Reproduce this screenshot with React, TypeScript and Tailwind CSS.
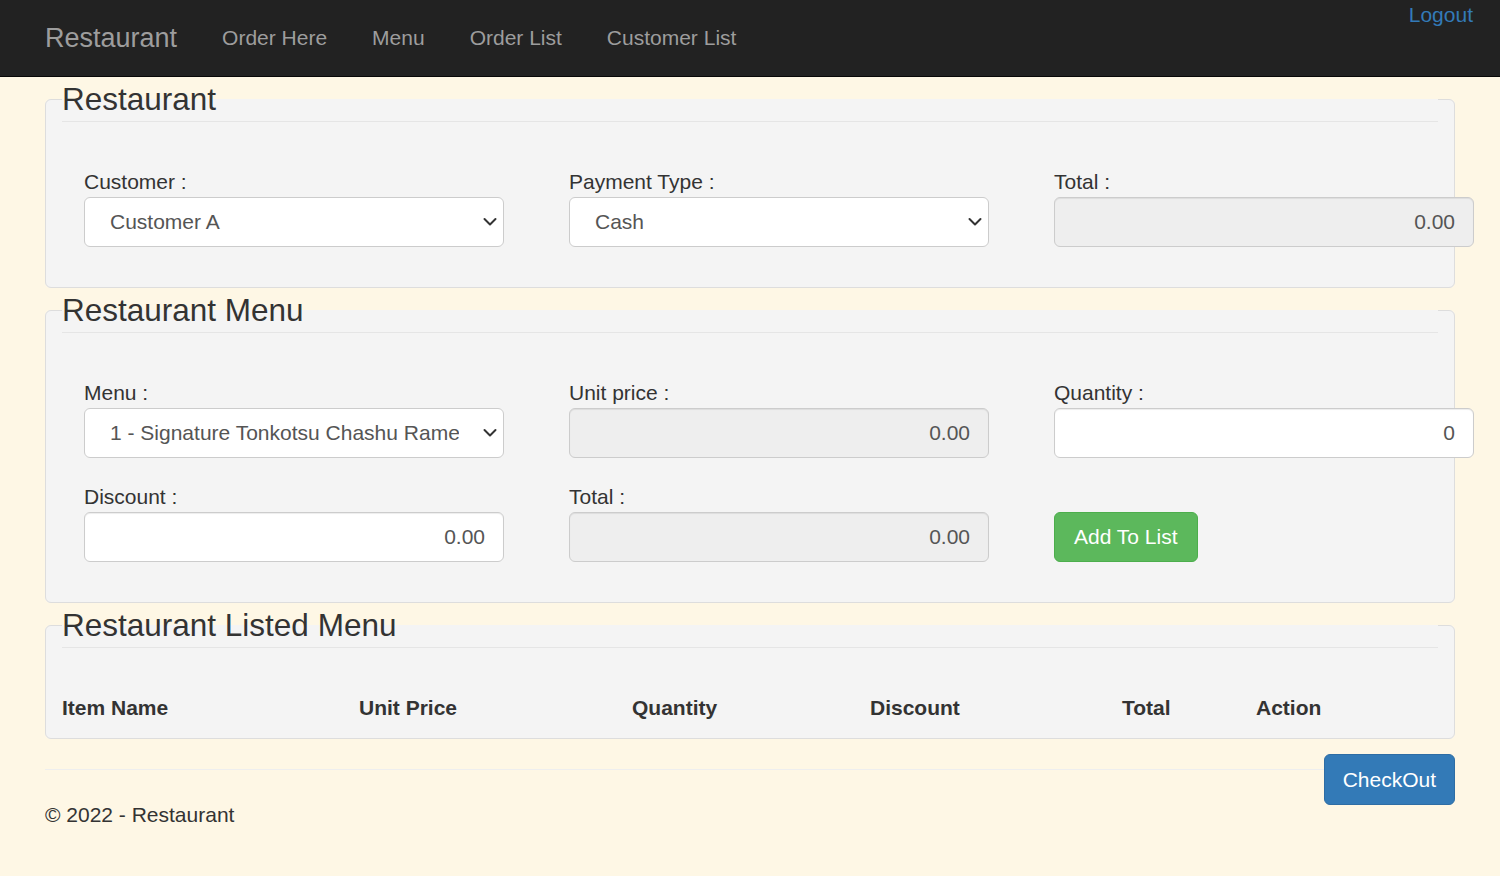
import React from "react";

const font = { fontFamily: '"Liberation Sans", Arial, Helvetica, sans-serif' };

function Chevron() {
  return (
    <svg
      className="pointer-events-none absolute right-[7px] top-1/2 -translate-y-1/2"
      width="14"
      height="9"
      viewBox="0 0 14 9"
      fill="none"
    >
      <path d="M1.5 1.5 L7 7 L12.5 1.5" stroke="#333" strokeWidth="2" strokeLinecap="round" strokeLinejoin="round" />
    </svg>
  );
}

function Select({ value }: { value: string }) {
  return (
    <div className="relative w-[420px] h-[50px]">
      <select
        defaultValue={value}
        className="appearance-none w-full h-full rounded-[6px] border border-[#ccc] bg-white pl-[25px] pr-[44px] text-[21px] text-[#555] outline-none overflow-hidden whitespace-nowrap"
        style={font}
      >
        <option value={value}>{value}</option>
      </select>
      <Chevron />
    </div>
  );
}

function NumInput({ value, readOnly }: { value: string; readOnly?: boolean }) {
  return (
    <input
      readOnly
      value={value}
      className={
        "w-[420px] h-[50px] rounded-[6px] border border-[#ccc] px-[18px] text-right text-[21px] text-[#555] outline-none shadow-[inset_0_1px_1px_rgba(0,0,0,0.075)] " +
        (readOnly ? "bg-[#eeeeee]" : "bg-white")
      }
      style={font}
    />
  );
}

function Field({ label, children }: { label: string; children: React.ReactNode }) {
  return (
    <div className="flex flex-col">
      <label className="text-[21px] leading-[30px] text-[#333]">{label}</label>
      {children}
    </div>
  );
}

function Fieldset({ title, children, className }: { title: string; children: React.ReactNode; className?: string }) {
  return (
    <fieldset className={"min-w-0 border border-[#dddddd] rounded-[6px] bg-[#f4f4f4] px-[16px] " + (className ?? "")}>
      <legend className="w-full border-b border-[#e5e5e5] text-[31.5px] leading-[44px] text-[#333] mb-[30px]">
        {title}
      </legend>
      {children}
    </fieldset>
  );
}

export default function App() {
  return (
    <div className="min-h-[876px] bg-[#fef7e5] text-[#333]" style={font}>
      {/* Navbar */}
      <nav className="h-[77px] bg-[#222222] border-b border-[#080808] flex pl-[45px] pr-[27px]">
        <a className="h-[76px] py-[22.5px] text-[27px] leading-[30px] text-[#9d9d9d]">Restaurant</a>
        <ul className="flex ml-[22.5px]">
          {["Order Here", "Menu", "Order List", "Customer List"].map((t) => (
            <li key={t}>
              <a className="block px-[22.5px] py-[22.5px] text-[21px] leading-[30px] text-[#9d9d9d]">{t}</a>
            </li>
          ))}
        </ul>
        <a className="ml-auto self-start text-[21px] leading-[30px] text-[#337ab7]">Logout</a>
      </nav>

      <div className="w-[1410px] mx-auto">
        <Fieldset title="Restaurant" className="pb-[18px]">
          <div className="grid grid-cols-[485px_485px_485px] pt-[15px] pl-[22px] pb-[22px]">
            <Field label="Customer :">
              <Select value="Customer A" />
            </Field>
            <Field label="Payment Type :">
              <Select value="Cash" />
            </Field>
            <Field label="Total :">
              <NumInput value="0.00" readOnly />
            </Field>
          </div>
        </Fieldset>

        <Fieldset title="Restaurant Menu" className="pb-[18px]">
          <div className="grid grid-cols-[485px_485px_485px] gap-y-[24px] pt-[15px] pl-[22px] pb-[22px]">
            <Field label="Menu :">
              <Select value="1 - Signature Tonkotsu Chashu Ramen" />
            </Field>
            <Field label="Unit price :">
              <NumInput value="0.00" readOnly />
            </Field>
            <Field label="Quantity :">
              <NumInput value="0" />
            </Field>
            <Field label="Discount :">
              <NumInput value="0.00" />
            </Field>
            <Field label="Total :">
              <NumInput value="0.00" readOnly />
            </Field>
            <div className="flex flex-col">
              <div className="h-[30px]" />
              <button className="self-start h-[50px] px-[19px] rounded-[6px] border border-[#4cae4c] bg-[#5cb85c] text-white text-[21px]">
                Add To List
              </button>
            </div>
          </div>
        </Fieldset>

        <Fieldset title="Restaurant Listed Menu" className="pb-[15px]">
          <table className="w-full border-collapse">
            <thead>
              <tr>
                <th className="w-[297px] pt-[15px] text-left text-[21px] leading-[30px] font-bold">Item Name</th>
                <th className="w-[273px] pt-[15px] text-left text-[21px] leading-[30px] font-bold">Unit Price</th>
                <th className="w-[238px] pt-[15px] text-left text-[21px] leading-[30px] font-bold">Quantity</th>
                <th className="w-[252px] pt-[15px] text-left text-[21px] leading-[30px] font-bold">Discount</th>
                <th className="w-[134px] pt-[15px] text-left text-[21px] leading-[30px] font-bold">Total</th>
                <th className="pt-[15px] text-left text-[21px] leading-[30px] font-bold">Action</th>
              </tr>
            </thead>
            <tbody />
          </table>
        </Fieldset>

        <div className="relative">
          <div className="absolute right-0 top-[15px]">
            <button className="h-[51px] px-[18px] rounded-[6px] border border-[#2e6da4] bg-[#337ab7] text-white text-[21px]">
              CheckOut
            </button>
          </div>
        </div>
        <hr className="mt-[30px] mb-[30px] border-0 border-t border-[#eeeeee]" />
        <footer>
          <p className="text-[21px] leading-[30px] text-[#333]">© 2022 - Restaurant</p>
        </footer>
      </div>
    </div>
  );
}
